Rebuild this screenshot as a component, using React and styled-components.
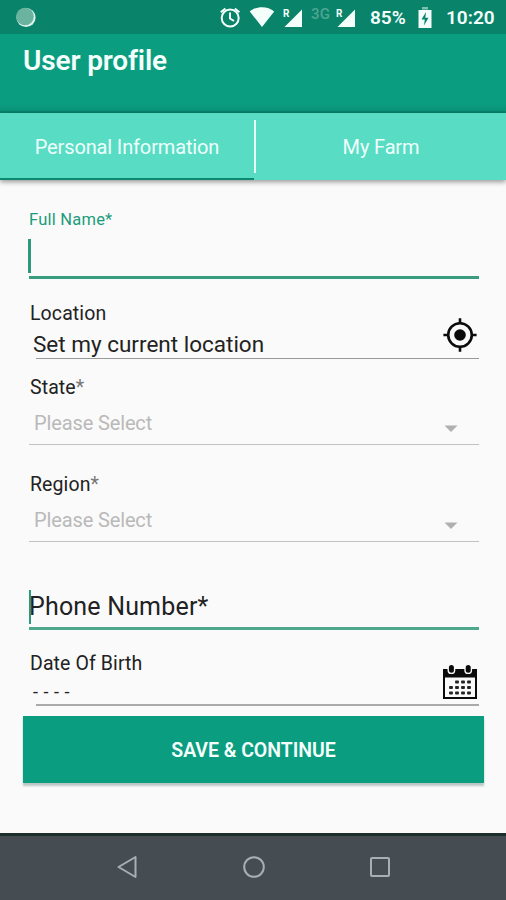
import React from "react";
import styled, { createGlobalStyle } from "styled-components";

const GlobalStyle = createGlobalStyle`
  body {
    margin: 0;
    background: #fafafa;
    font-family: Roboto, "Noto Sans", sans-serif;
  }
`;

const Screen = styled.div`
  display: flex;
  flex-direction: column;
  width: 506px;
  height: 900px;
  overflow: hidden;
  background: #fafafa;
`;

const StatusBar = styled.div`
  display: flex;
  flex: none;
  align-items: center;
  box-sizing: border-box;
  height: 34px;
  padding: 0 11px 0 16px;
  background: #09836a;
  color: #f4fffc;
`;

const StatusIcons = styled.svg`
  display: block;
  flex: none;
  width: ${props => props.width}px;
  height: 34px;
  margin-left: ${props => props.$gap || 0}px;
`;

const Network = styled.span`
  width: 20px;
  margin: -7px 0 0 8px;
  font-size: 15px;
  line-height: 18px;
  font-weight: 500;
  letter-spacing: 0.2px;
  color: #4fa592;
`;

const StatusText = styled.span`
  width: ${props => props.$width}px;
  margin-left: ${props => props.$gap}px;
  font-size: 19px;
  line-height: 34px;
  font-weight: 600;
  letter-spacing: ${props => props.$spacing || 0}px;
  white-space: nowrap;
  padding-top: 2px;
`;

const Header = styled.header`
  flex: none;
  box-sizing: border-box;
  height: 79px;
  padding: 8px 23px 0;
  border-bottom: 2px solid #078268;
  background: linear-gradient(#0a9d80 90%, #099277);
`;

const Title = styled.h1`
  margin: 0;
  font-size: 28px;
  line-height: 37px;
  font-weight: 600;
  letter-spacing: -0.15px;
  color: #f5fffc;
`;

const Tabs = styled.nav`
  display: flex;
  flex: none;
  align-items: center;
  height: 67px;
  background: #58dcc4;
  box-shadow: 0 2px 5px rgba(0, 0, 0, 0.4);
`;

const Tab = styled.div`
  flex: ${props => (props.$active ? "none" : 1)};
  box-sizing: border-box;
  width: 254px;
  height: 67px;
  border-bottom: 2px solid ${props => (props.$active ? "#0b8a70" : "transparent")};
  font-size: 20px;
  line-height: 69px;
  letter-spacing: -0.14px;
  text-align: center;
  color: #effffb;
`;

const Divider = styled.div`
  width: 2px;
  height: 53px;
  background: #e3faf5;
`;

const Form = styled.main`
  display: flex;
  flex: 1;
  flex-direction: column;
  padding: 0 27px 0 29px;
`;

const Field = styled.div`
  position: relative;
  display: flex;
  flex: none;
  flex-direction: column;
  box-sizing: border-box;
  height: ${props => props.$height}px;
  padding-top: ${props => props.$top}px;
`;

const Label = styled.label`
  height: 24px;
  padding-left: ${props => (props.$active ? 0 : 1)}px;
  font-size: ${props => (props.$active ? 16.5 : 19.5)}px;
  line-height: 24px;
  letter-spacing: ${props => props.$spacing || 0}px;
  color: ${props => (props.$active ? "#1c9c7c" : "#222")};
`;

const Star = styled.span`
  color: #777;
`;

const Row = styled.div`
  display: flex;
  justify-content: space-between;
  height: 26px;
  margin-top: ${props => props.$gap}px;
  padding-left: ${props => props.$indent}px;
`;

const Value = styled.span`
  font-size: ${props => props.$size}px;
  line-height: 28px;
  letter-spacing: ${props => props.$spacing || 0}px;
  color: ${props => (props.$muted ? "#b9b9b9" : "#222")};
  white-space: pre;
`;

const Line = styled.div`
  flex: none;
  height: ${props => (props.$active ? 3 : 1.5)}px;
  margin: auto 0 0 ${props => props.$inset || 0}px;
  background: ${props => props.$color};
`;

// The cursor lies over the text of the field
const Caret = styled.div`
  position: absolute;
  left: ${props => (props.$thin ? 0 : -1)}px;
  bottom: 6px;
  width: ${props => (props.$thin ? 2 : 3)}px;
  height: 34px;
  background: #2a9a7b;
`;

const Arrow = styled.svg`
  width: 14px;
  height: 8px;
  margin: 16px 21px 0 0;
`;

const FieldIcon = styled.svg`
  flex: none;
  width: 34px;
  height: 36px;
  margin: ${props => props.$top}px 2px 0 0;
`;

const SaveButton = styled.button`
  flex: none;
  height: 67px;
  margin: 11px -5px 0 -6px;
  padding: 1px 0 0;
  border: 0;
  background: #0a9d80;
  box-shadow: 0 3px 2px rgba(40, 80, 72, 0.3);
  font-family: inherit;
  font-size: 19.5px;
  font-weight: 600;
  letter-spacing: -0.05px;
  color: #f5fffc;
`;

const NavBar = styled.footer`
  display: flex;
  flex: none;
  align-items: center;
  justify-content: space-between;
  box-sizing: border-box;
  height: 67px;
  padding: 0 114px 2px 115px;
  border-top: 3px solid #1b302d;
  background: #454d53;
`;

const NavIcon = styled.svg`
  width: 24px;
  height: 24px;
  fill: none;
  stroke: #a9aeb1;
  stroke-width: 2;
  stroke-linejoin: round;
`;

const Signal = ({ gap }) => (
  <StatusIcons width={20} $gap={gap} viewBox="0 0 20 34">
    <path d="M19 9.5V27H1.5Z" fill="#f4fffc" />
    <text x="0" y="17" fontSize="10" fontWeight="700" fill="#f4fffc" stroke="#09836a" strokeWidth="2" paintOrder="stroke">R</text>
  </StatusIcons>
);

const TargetIcon = () => (
  <FieldIcon $top={-13} viewBox="0 0 34 36">
    <g fill="none" stroke="#0b0b0b" strokeWidth="2.6">
      <circle cx="17" cy="18" r="11.8" />
      <path d="M17 1.2V7M17 29V34.8M.4 18H6M28 18H33.6" />
    </g>
    <circle cx="17" cy="18" r="5.8" fill="#0b0b0b" />
  </FieldIcon>
);

const days = [
  [14, 18], [20, 18], [26, 18],
  [8, 23.5], [14, 23.5], [20, 23.5], [26, 23.5],
  [8, 29], [14, 29], [20, 29], [26, 29]
];

const CalendarIcon = () => (
  <FieldIcon $top={-14} viewBox="0 0 34 36">
    <rect x="1" y="6" width="32" height="28" fill="#fafafa" stroke="#0b0b0b" strokeWidth="2" />
    <path d="M0 5H34V13.500H0Z" fill="#0b0b0b" />
    <g fill="#0b0b0b" stroke="#fafafa" strokeWidth="1.4">
      <rect x="5.2" y=".4" width="6.4" height="9" rx="3.200" />
      <rect x="22" y=".4" width="6.4" height="9" rx="3.200" />
    </g>
    {days.map(([x, y]) => (
      <rect key={`${x}-${y}`} x={x - 1.9} y={y - 1.6} width="3.8" height="3.2" rx=".8" fill="#222" />
    ))}
  </FieldIcon>
);

const SelectField = ({ label, height, top }) => (
  <Field $height={height} $top={top}>
    <Label $spacing={0.1}>
      {label}
      <Star>*</Star>
    </Label>
    <Row $gap={9} $indent={5}>
      <Value $muted $size={20} $spacing={-0.13}>Please Select</Value>
      <Arrow viewBox="0 0 14 8">
        <path d="M.5 .5H13.500L7 7Z" fill="#b0b0b0" />
      </Arrow>
    </Row>
    <Line $color="#c2c2c2" />
  </Field>
);

const App = () => (
  <>
    <GlobalStyle />
    <Screen>
      <StatusBar>
        <StatusIcons width={20} viewBox="0 0 20 34">
          <circle cx="10" cy="17.5" r="9.6" fill="#dff3ed" />
          <circle cx="9" cy="16.5" r="8.8" fill="#69b39f" />
        </StatusIcons>
        <StatusIcons width={22} $gap={183} viewBox="0 0 22 34">
          <g fill="none" stroke="#f4fffc" strokeWidth="2">
            <circle cx="11.2" cy="18" r="8.5" />
            <path d="M11 12.5V18.5L15 21M1.8 12.2L6.4 8.4M20.4 12.2L15.8 8.4" />
          </g>
        </StatusIcons>
        <StatusIcons width={26} $gap={8} viewBox="0 0 26 34">
          <path d="M.8 11.5C7 5.8 19 5.8 25.2 11.5L13 27Z" fill="#f4fffc" />
        </StatusIcons>
        <Signal gap={8} />
        <Network>3G</Network>
        <Signal gap={5} />
        <StatusText $width={38} $gap={14}>85%</StatusText>
        <StatusIcons width={14} $gap={10} viewBox="0 0 14 34">
          <path d="M4 7H10V9.500H4Z" fill="#7fc0af" />
          <path d="M.5 10H13.500V28H.5Z" fill="#f4fffc" />
          <path d="M8 12L3.500 19.500H6.800L6 25.500L10.500 17.800H7.300Z" fill="#09836a" />
        </StatusIcons>
        <StatusText $width={49} $gap={14}>10:20</StatusText>
      </StatusBar>
      <Header>
        <Title>User profile</Title>
      </Header>
      <Tabs>
        <Tab $active>Personal Information</Tab>
        <Divider />
        <Tab>My Farm</Tab>
      </Tabs>
      <Form>
        <Field $height={99} $top={28}>
          <Label $active $spacing={0.22}>Full Name*</Label>
          <Caret />
          <Line $active $color="#3a9c7e" />
        </Field>
        <Field $height={80} $top={23}>
          <Label $spacing={0.1}>Location</Label>
          <Row $gap={4} $indent={4}>
            <Value $size={22.5}>Set my current location</Value>
            <TargetIcon />
          </Row>
          <Line $inset={7} $color="#999" />
        </Field>
        <SelectField label="State" height={86} top={17} />
        <SelectField label="Region" height={97} top={28} />
        <Field $height={88} $top={51}>
          <Row $gap={0} $indent={0}>
            <Value $size={25} $spacing={0.18}>Phone Number*</Value>
          </Row>
          <Caret $thin />
          <Line $active $color="#4fa88b" />
        </Field>
        <Field $height={75} $top={22}>
          <Label $spacing={0.1}>Date Of Birth</Label>
          <Row $gap={2} $indent={4}>
            <Value $size={18} $spacing={0.55}>- - - -</Value>
            <CalendarIcon />
          </Row>
          <Line $inset={7} $color="#aaa" />
        </Field>
        <SaveButton>SAVE &amp; CONTINUE</SaveButton>
      </Form>
      <NavBar>
        <NavIcon viewBox="0 0 24 24">
          <path d="M20.500 2V22L3.500 12Z" />
        </NavIcon>
        <NavIcon viewBox="0 0 24 24">
          <circle cx="12" cy="12" r="9.800" />
        </NavIcon>
        <NavIcon viewBox="0 0 24 24">
          <rect x="3" y="3" width="18" height="18" rx="1" />
        </NavIcon>
      </NavBar>
    </Screen>
  </>
);

export default App;
